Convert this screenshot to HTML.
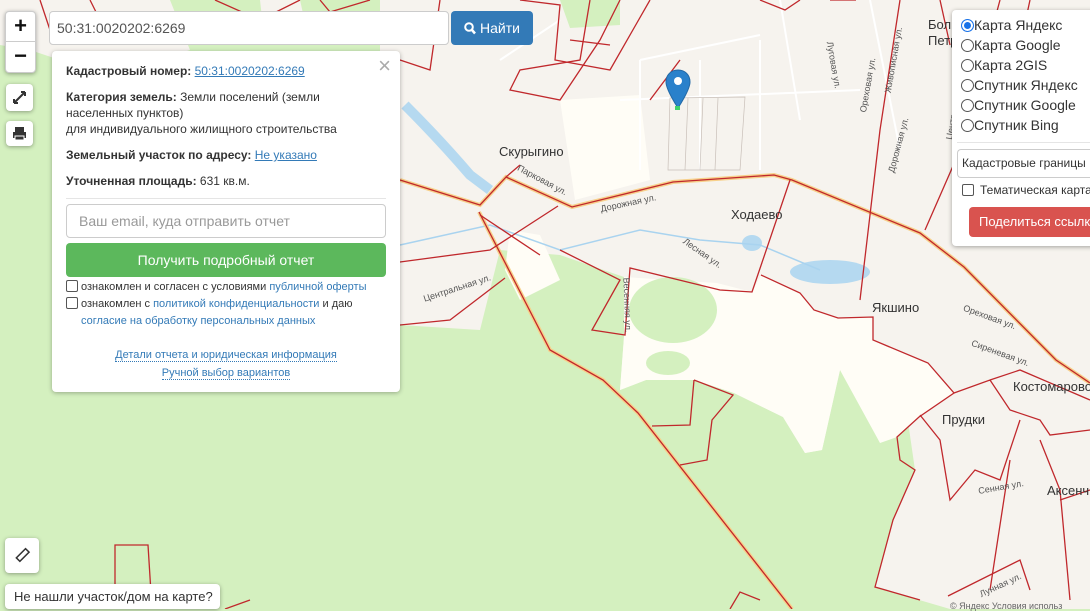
<!DOCTYPE html>
<html><head><meta charset="utf-8"><style>
*{box-sizing:border-box}
body{margin:0;width:1090px;height:609px;overflow:hidden;position:relative;font-family:"Liberation Sans",Arial,sans-serif;color:#333;background:#d4f0bf}
svg.map{position:absolute;left:0;top:0}
.btn{position:absolute;background:#fff;border-radius:4px;box-shadow:0 1px 4px rgba(0,0,0,.35)}
.panel{position:absolute;left:52px;top:51px;width:348px;height:341px;background:#fff;border-radius:4px;box-shadow:0 1px 5px rgba(0,0,0,.3);font-size:12px;padding:0 14px}
.panel p{margin:0;line-height:16px}
a{color:#337ab7}
.lbl{position:absolute;font-size:13px;color:#333}
.street{position:absolute;font-size:9px;color:#555;white-space:nowrap}
</style></head><body>
<svg class="map" width="1090" height="609" viewBox="0 0 1090 609">
<rect width="1090" height="609" fill="#d4f0bf"/>
<polygon points="0,0 170,0 190,50 130,70 60,60 30,50 0,45" fill="#f6f3ee"/>
<polygon points="260,0 300,0 310,45 265,45" fill="#f6f3ee"/>
<polygon points="380,0 400,0 400,200 380,150" fill="#f6f3ee"/>
<!-- main beige -->
<polygon points="400,0 1090,0 1090,609 950,609 875,587 893,520 915,470 902,380 840,370 822,450 805,453 783,417 734,393 695,380 646,380 620,390 624,337 624,277 560,255 500,250 480,300 400,325" fill="#f6f3ee"/>
<polygon points="400,200 480,215 500,250 480,330 400,325" fill="#f6f3ee"/>
<polygon points="560,0 620,0 620,25 570,28" fill="#d4f0bf"/>
<!-- white -->
<polygon points="624,277 717,283 752,292 761,275 800,293 814,310 838,318 873,317 873,340 928,363 954,393 919,417 897,437 880,443 840,370 822,450 805,453 783,417 734,393 695,380 646,380 620,390 624,337" fill="#fffdf6"/>
<polygon points="560,100 640,95 650,180 575,200" fill="#fffdf6"/>
<polygon points="510,230 540,235 560,280 520,300 505,270" fill="#fffdf6"/>
<ellipse cx="673" cy="310" rx="44" ry="33" fill="#d4f0bf"/>
<ellipse cx="668" cy="363" rx="22" ry="12" fill="#d4f0bf"/>
<!-- water -->
<path d="M405,105 Q440,140 470,175 L490,190" stroke="#b5d9f0" stroke-width="10" fill="none"/>
<ellipse cx="830" cy="272" rx="40" ry="12" fill="#b5d9f0"/>
<ellipse cx="752" cy="243" rx="10" ry="8" fill="#b5d9f0"/>
<path d="M400,245 L490,225 L560,250 L640,230 L700,240 L760,245 L820,270" stroke="#a9d3ef" stroke-width="1.5" fill="none"/>
<g stroke="#fff" stroke-width="2" fill="none">
<path d="M620,100 L860,90 M640,60 L760,35 M780,0 L800,120 M870,0 L900,150 M500,60 L560,20 M640,60 L640,170 M700,60 L700,170 M760,40 L760,170"/>
</g>
<g stroke="#c8bfb8" stroke-width="0.7" fill="none">
<path d="M670,98 L745,97 L740,170 L668,170 Z M688,98 L685,170 M703,98 L700,170 M718,98 L715,170"/>
</g>
<path d="M400,180 L480,205 L506,177 L572,207 L673,182 L774,175 L792,180 L920,233 L964,267 L1056,360 L1090,383" stroke="#f7d08a" stroke-width="4" fill="none"/>
<path d="M479,212 L550,350 L603,380 L638,413 L792,609" stroke="#f7d08a" stroke-width="4" fill="none"/>
<g stroke="#c0282c" stroke-width="1.3" fill="none">
<path d="M400,180 L480,205 L506,177 L572,207 L673,182 L774,175 L792,180 L920,233 L964,267 L1056,360 L1090,383"/>
<path d="M479,212 L550,350 L603,380 L638,413 L792,609"/>
<path d="M400,262 L490,250 L558,206 M400,325 L450,320 L505,278 M480,215 L540,255 M506,177 L520,165 M560,250 L620,280 L592,330 L625,335 L630,268 L720,290 L752,292 L790,180"/>
<path d="M761,275 L800,293 L814,310 L838,318 L873,317 L873,340 L928,363 L954,393 L919,417 L897,437 L900,460 L915,470 L893,520 L875,587 L920,600"/>
<path d="M694,380 L690,425 L652,426 M694,380 L733,395 L712,420 L707,460 L680,465"/>
<path d="M954,393 L990,380 L1010,410 L1040,420 L1050,435 L1090,430 M990,380 L1020,370 L1090,400 M920,415 L940,440 L950,500 L975,470 L1000,480 L1020,420 M1010,460 L990,590 M1040,440 L1060,490 L1070,600"/>
<path d="M948,596 L1020,560 L1030,590 M1060,500 L1090,490"/>
<path d="M856,0 L830,0 M900,0 L880,130 L860,300 M1000,0 L960,150 L925,230 M1030,0 L1000,140 L960,240 M940,0 L950,45"/>
<path d="M760,0 L785,10 L800,0 M680,60 L650,100 M590,0 L580,60 L520,70 L510,90 L560,100 L600,40 L620,0"/>
<path d="M520,0 L560,5 L555,60 L610,70 L650,0 M570,40 L610,45"/>
<path d="M40,0 L50,30 M90,0 L100,20 M215,0 L260,20 L300,0 M320,0 L330,12 L370,0 M380,25 L400,30 M400,60 L430,70 L440,0"/>
<path d="M115,609 L115,545 L148,545 L152,609 M225,609 L250,600 M730,609 L740,592 L760,600"/>
<path d="M960,150 L1010,170 L1030,160 L1040,200"/>
</g>
</svg>

<div class="street" style="left:515px;top:175px;transform:rotate(28deg)">Парковая ул.</div>
<div class="street" style="left:600px;top:198px;transform:rotate(-12deg)">Дорожная ул.</div>
<div class="street" style="left:680px;top:248px;transform:rotate(35deg)">Лесная ул.</div>
<div class="street" style="left:422px;top:283px;transform:rotate(-18deg)">Центральная ул.</div>
<div class="street" style="left:600px;top:300px;transform:rotate(88deg)">Весенняя ул.</div>
<div class="street" style="left:962px;top:312px;transform:rotate(20deg)">Ореховая ул.</div>
<div class="street" style="left:970px;top:348px;transform:rotate(20deg)">Сиреневая ул.</div>
<div class="street" style="left:978px;top:482px;transform:rotate(-10deg)">Сенная ул.</div>
<div class="street" style="left:978px;top:580px;transform:rotate(-25deg)">Лунная ул.</div>
<div class="street" style="left:810px;top:60px;transform:rotate(80deg)">Луговая ул.</div>
<div class="street" style="left:840px;top:80px;transform:rotate(-80deg)">Ореховая ул.</div>
<div class="street" style="left:860px;top:55px;transform:rotate(-80deg)">Живописная ул.</div>
<div class="street" style="left:870px;top:140px;transform:rotate(-75deg)">Дорожная ул.</div>
<div class="street" style="left:920px;top:100px;transform:rotate(-80deg)">Центральная ул.</div>
<div class="lbl" style="left:499px;top:144px">Скурыгино</div>
<div class="lbl" style="left:731px;top:207px">Ходаево</div>
<div class="lbl" style="left:872px;top:300px">Якшино</div>
<div class="lbl" style="left:1013px;top:379px">Костомарово</div>
<div class="lbl" style="left:942px;top:412px">Прудки</div>
<div class="lbl" style="left:1047px;top:483px">Аксенч</div>
<div class="lbl" style="left:928px;top:17px;line-height:16px">Бол<br>Петр</div>

<svg style="position:absolute;left:665px;top:68px" width="26" height="44" viewBox="0 0 26 44">
<path d="M13,2 C6,2 1,7 1,14 C1,22 13,40 13,40 C13,40 25,22 25,14 C25,7 20,2 13,2Z" fill="#2a81cb" stroke="#2369a6"/>
<circle cx="13" cy="13" r="4" fill="#fff"/>
<rect x="10" y="38" width="5" height="4" fill="#3fd16a"/>
</svg>

<div class="btn" style="left:5px;top:11px;width:31px;height:62px;border:1px solid #ccc">
<div style="height:30px;border-bottom:1px solid #ccc;text-align:center;font-size:22px;line-height:28px;font-weight:bold;color:#111">+</div>
<div style="text-align:center;font-size:22px;line-height:28px;font-weight:bold;color:#111">−</div>
</div>
<div class="btn" style="left:6px;top:84px;width:27px;height:27px">
<svg width="27" height="27"><path d="M8,19 L19,8 M8,19 l0,-4 M8,19 l4,0 M19,8 l-4,0 M19,8 l0,4" stroke="#333" stroke-width="2" fill="none"/></svg></div>
<div class="btn" style="left:6px;top:121px;width:27px;height:25px">
<svg width="27" height="25"><rect x="9" y="6" width="9" height="5" fill="#333"/><rect x="7" y="11" width="13" height="6" fill="#333"/><rect x="9" y="15" width="9" height="4" fill="#333" stroke="#fff" stroke-width="1"/></svg></div>
<div class="btn" style="left:5px;top:538px;width:34px;height:35px">
<svg width="34" height="35"><rect x="11" y="15" width="13" height="5" transform="rotate(-45 17 17)" fill="none" stroke="#333" stroke-width="1.5"/></svg></div>
<div class="btn" style="left:5px;top:584px;width:215px;height:25px;font-size:13px;line-height:25px;padding-left:9px;border-radius:4px">Не нашли участок/дом на карте?</div>

<div style="position:absolute;left:49px;top:11px;width:400px;height:34px;background:#fff;border:1px solid #ccc;border-radius:4px;font-size:14px;line-height:32px;padding-left:7px;color:#555">50:31:0020202:6269</div>
<div style="position:absolute;left:451px;top:11px;width:82px;height:34px;background:#337ab7;border-radius:4px;color:#fff;font-size:14px;line-height:34px;text-align:center">
<svg width="12" height="13" style="vertical-align:-2px"><circle cx="5" cy="5" r="3.8" stroke="#fff" stroke-width="2" fill="none"/><path d="M8,8 L11,11.5" stroke="#fff" stroke-width="2.5"/></svg> Найти</div>

<div class="panel">
<div style="position:absolute;right:9px;top:2px;font-size:22px;color:#aaa">×</div>
<p style="margin-top:12px"><b>Кадастровый номер:</b> <a href="#">50:31:0020202:6269</a></p>
<p style="margin-top:10px"><b>Категория земель:</b> Земли поселений (земли<br>населенных пунктов)<br>для индивидуального жилищного строительства</p>
<p style="margin-top:10px"><b>Земельный участок по адресу:</b> <a href="#">Не указано</a></p>
<p style="margin-top:10px"><b>Уточненная площадь:</b> 631 кв.м.</p>
<div style="border-top:1px solid #e5e5e5;margin-top:9px"></div>
<div style="margin-top:5px;height:34px;border:1px solid #ccc;border-radius:4px;font-size:14px;color:#999;line-height:32px;padding-left:12px">Ваш email, куда отправить отчет</div>
<div style="margin-top:5px;height:34px;background:#5cb85c;border-radius:4px;color:#fff;font-size:14px;text-align:center;line-height:34px">Получить подробный отчет</div>
<div style="margin-top:2px;font-size:11px;line-height:17px;color:#333">
<div><span style="display:inline-block;width:12px;height:12px;border:1px solid #555;border-radius:2px;vertical-align:-2px;margin-right:3px"></span>ознакомлен и согласен с условиями <span style="color:#337ab7">публичной оферты</span></div>
<div><span style="display:inline-block;width:12px;height:12px;border:1px solid #555;border-radius:2px;vertical-align:-2px;margin-right:3px"></span>ознакомлен с <span style="color:#337ab7">политикой конфиденциальности</span> и даю</div>
<div style="padding-left:15px;color:#337ab7">согласие на обработку персональных данных</div>
</div>
<div style="margin-top:16px;text-align:center;font-size:11px;line-height:18px;color:#337ab7"><span style="border-bottom:1px dotted #337ab7">Детали отчета и юридическая информация</span><br><span style="border-bottom:1px dotted #337ab7">Ручной выбор вариантов</span></div>
</div>

<div style="position:absolute;left:952px;top:10px;width:150px;height:236px;background:#fff;border-radius:4px;box-shadow:0 1px 5px rgba(0,0,0,.35);font-size:14px;color:#333">
<div style="padding:5px 0 0 9px;line-height:20px">
<div><span style="display:inline-block;width:13px;height:13px;border-radius:50%;border:1px solid #1a73e8;vertical-align:-2px;box-shadow:inset 0 0 0 2px #fff;background:#1a73e8"></span>Карта Яндекс</div>
<div><span style="display:inline-block;width:13px;height:13px;border-radius:50%;border:1px solid #555;vertical-align:-2px"></span>Карта Google</div>
<div><span style="display:inline-block;width:13px;height:13px;border-radius:50%;border:1px solid #555;vertical-align:-2px"></span>Карта 2GIS</div>
<div><span style="display:inline-block;width:13px;height:13px;border-radius:50%;border:1px solid #555;vertical-align:-2px"></span>Спутник Яндекс</div>
<div><span style="display:inline-block;width:13px;height:13px;border-radius:50%;border:1px solid #555;vertical-align:-2px"></span>Спутник Google</div>
<div><span style="display:inline-block;width:13px;height:13px;border-radius:50%;border:1px solid #555;vertical-align:-2px"></span>Спутник Bing</div>
</div>
<div style="margin:7px 0 0 5px;border-top:1px solid #e5e5e5"></div>
<div style="margin:6px 0 0 5px;height:29px;border:1px solid #ccc;border-radius:4px 0 0 4px;border-right:none;font-size:12px;line-height:27px;padding-left:4px">Кадастровые границы</div>
<div style="margin:5px 0 0 10px;font-size:12px"><span style="display:inline-block;width:12px;height:12px;border:1px solid #555;border-radius:2px;vertical-align:-2px;margin-right:6px"></span>Тематическая карта</div>
<div style="margin:10px 0 0 17px;height:30px;background:#d9534f;border-radius:4px 0 0 4px;color:#fff;font-size:13px;line-height:30px;padding-left:10px;white-space:nowrap;overflow:hidden">Поделиться ссылкой</div>
</div>
<div style="position:absolute;left:950px;top:601px;font-size:9px;color:#666">© Яндекс Условия использ</div>
</body></html>
